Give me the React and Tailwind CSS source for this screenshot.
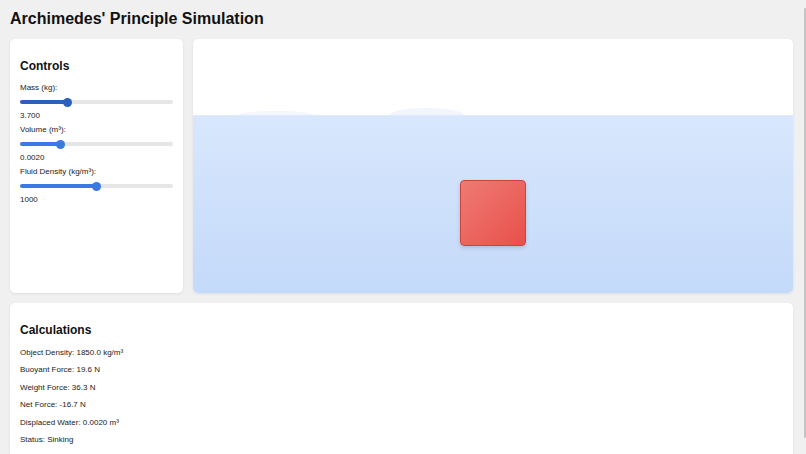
import React from "react";

const font = { fontFamily: '"Liberation Sans", Arial, Helvetica, sans-serif' };

function Slider({ fraction, color }) {
  return (
    <div className="mt-[5px] flex h-[10px] w-full items-center">
      <div
        className="h-[4px] shrink-0 rounded-l-full"
        style={{ width: `calc(4.5px + ${fraction} * (100% - 9px))`, background: color }}
      />
      <div className="relative z-10 -mx-[4.5px] h-[9px] w-[9px] shrink-0 rounded-full" style={{ background: color }} />
      <div className="h-[4px] flex-1 rounded-r-full bg-[#e6e6e6]" />
    </div>
  );
}

function Control({ label, value, fraction, color }) {
  return (
    <div className="flex flex-col">
      <div className="text-[8px] leading-[9px] text-[#222]">{label}</div>
      <Slider fraction={fraction} color={color} />
      <div className="mt-[4px] text-[8px] leading-[9px] text-[#222]">{value}</div>
    </div>
  );
}

export default function App() {
  const lines = [
    "Object Density: 1850.0 kg/m³",
    "Buoyant Force: 19.6 N",
    "Weight Force: 36.3 N",
    "Net Force: -16.7 N",
    "Displaced Water: 0.0020 m³",
    "Status: Sinking",
  ];
  return (
    <div className="relative h-[454px] w-[806px] overflow-hidden bg-[#f0f0f0]" style={font}>
      <div className="flex flex-col pl-[10px] pr-[13px] pt-[10px]">
        <h1 className="mb-[11px] text-[16px] font-bold leading-[18px] text-[#111]">
          Archimedes' Principle Simulation
        </h1>
        <div className="flex gap-[10px]">
          <div className="flex h-[254px] w-[173px] shrink-0 flex-col rounded-[5px] bg-white p-[10px] shadow-[0_1px_3px_rgba(0,0,0,0.08)]">
            <h2 className="mb-[10px] mt-[10px] text-[12px] font-bold leading-[14px] text-[#111]">Controls</h2>
            <div className="flex flex-col gap-[5px]">
              <Control label="Mass (kg):" value="3.700" fraction={0.3} color="#2d5fbc" />
              <Control label="Volume (m³):" value="0.0020" fraction={0.25} color="#3a79e4" />
              <Control label="Fluid Density (kg/m³):" value="1000" fraction={0.5} color="#3a79e4" />
            </div>
          </div>
          <div className="relative flex h-[254px] flex-1 flex-col overflow-hidden rounded-[5px] bg-white shadow-[0_1px_3px_rgba(0,0,0,0.08)]">
            <div className="h-[76px] shrink-0" />
            <div className="flex-1 border-t border-[#dfeafd] bg-gradient-to-b from-[#d8e7fc] to-[#c4dafa]" />
            <div className="absolute left-[45px] top-[72px] h-[4px] w-[76px] rounded-[50%_50%_0_0/100%_100%_0_0] bg-[#f3f7fe]" />
            <div className="absolute left-[197px] top-[69px] h-[7px] w-[74px] rounded-[50%_50%_0_0/100%_100%_0_0] bg-[#f1f5fd]" />
            <div className="absolute left-[267px] top-[141px] h-[66px] w-[66px] rounded-[4px] border border-[#c9443f] bg-gradient-to-br from-[#ef7a74] to-[#e84f4a] shadow-[0_2px_4px_rgba(0,0,0,0.15)]" />
          </div>
        </div>
        <div className="mt-[10px] flex flex-col rounded-[5px] bg-white p-[10px] shadow-[0_1px_3px_rgba(0,0,0,0.08)]">
          <h2 className="mb-[11px] mt-[10px] text-[12px] font-bold leading-[14px] text-[#111]">Calculations</h2>
          <div className="flex flex-col gap-[8px] pb-[10px]">
            {lines.map((l, i) => (
              <p key={i} className="text-[8px] leading-[9.4px] text-[#222]">
                {l}
              </p>
            ))}
          </div>
        </div>
      </div>
      <div className="absolute right-0 top-[8px] h-[430px] w-[2px] rounded-full bg-[#c4c4c4]" />
    </div>
  );
}
